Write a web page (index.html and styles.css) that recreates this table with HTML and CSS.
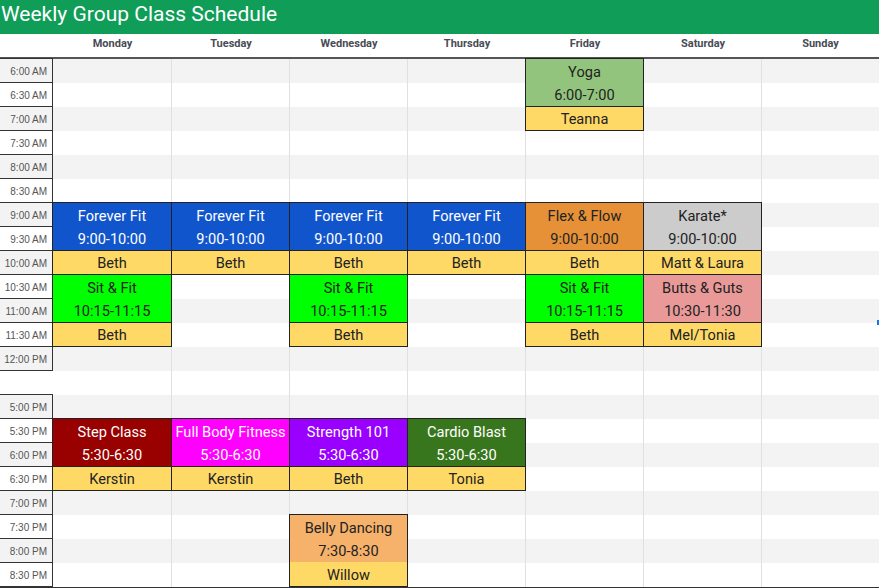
FILE: index.html
```html
<!DOCTYPE html>
<html>
<head>
<meta charset="utf-8">
<title>Weekly Group Class Schedule</title>
<link rel="stylesheet" href="styles.css">
</head>
<body>
<div class="page">
  <header class="title">Weekly Group Class Schedule</header>
  <div class="days">
    <div></div>
    <div>Monday</div><div>Tuesday</div><div>Wednesday</div><div>Thursday</div><div>Friday</div><div>Saturday</div><div>Sunday</div>
  </div>
  <div class="grid">
    <div class="col c2"></div><div class="col c3"></div><div class="col c4"></div><div class="col c5"></div><div class="col c6"></div><div class="col c7"></div>

    <div class="time">6:00 AM</div>
    <div class="time">6:30 AM</div>
    <div class="time">7:00 AM</div>
    <div class="time">7:30 AM</div>
    <div class="time">8:00 AM</div>
    <div class="time">8:30 AM</div>
    <div class="time">9:00 AM</div>
    <div class="time">9:30 AM</div>
    <div class="time">10:00 AM</div>
    <div class="time">10:30 AM</div>
    <div class="time">11:00 AM</div>
    <div class="time">11:30 AM</div>
    <div class="time">12:00 PM</div>
    <div class="gap"></div>
    <div class="time">5:00 PM</div>
    <div class="time">5:30 PM</div>
    <div class="time">6:00 PM</div>
    <div class="time">6:30 PM</div>
    <div class="time">7:00 PM</div>
    <div class="time">7:30 PM</div>
    <div class="time">8:00 PM</div>
    <div class="time">8:30 PM</div>

    <div class="cls c6 r1 yoga"><div class="top"><span>Yoga</span><span>6:00-7:00</span></div><div class="who">Teanna</div></div>

    <div class="cls c2 r7 blue"><div class="top"><span>Forever Fit</span><span>9:00-10:00</span></div><div class="who">Beth</div></div>
    <div class="cls c3 r7 blue"><div class="top"><span>Forever Fit</span><span>9:00-10:00</span></div><div class="who">Beth</div></div>
    <div class="cls c4 r7 blue"><div class="top"><span>Forever Fit</span><span>9:00-10:00</span></div><div class="who">Beth</div></div>
    <div class="cls c5 r7 blue"><div class="top"><span>Forever Fit</span><span>9:00-10:00</span></div><div class="who">Beth</div></div>
    <div class="cls c6 r7 flex"><div class="top"><span>Flex &amp; Flow</span><span>9:00-10:00</span></div><div class="who">Beth</div></div>
    <div class="cls c7 r7 karate"><div class="top"><span>Karate*</span><span>9:00-10:00</span></div><div class="who">Matt &amp; Laura</div></div>

    <div class="cls c2 r10 sit"><div class="top"><span>Sit &amp; Fit</span><span>10:15-11:15</span></div><div class="who">Beth</div></div>
    <div class="cls c4 r10 sit"><div class="top"><span>Sit &amp; Fit</span><span>10:15-11:15</span></div><div class="who">Beth</div></div>
    <div class="cls c6 r10 sit"><div class="top"><span>Sit &amp; Fit</span><span>10:15-11:15</span></div><div class="who">Beth</div></div>
    <div class="cls c7 r10 butts"><div class="top"><span>Butts &amp; Guts</span><span>10:30-11:30</span></div><div class="who">Mel/Tonia</div></div>

    <div class="cls c2 r16 step"><div class="top"><span>Step Class</span><span>5:30-6:30</span></div><div class="who">Kerstin</div></div>
    <div class="cls c3 r16 full"><div class="top"><span>Full Body Fitness</span><span>5:30-6:30</span></div><div class="who">Kerstin</div></div>
    <div class="cls c4 r16 strength"><div class="top"><span>Strength 101</span><span>5:30-6:30</span></div><div class="who">Beth</div></div>
    <div class="cls c5 r16 cardio"><div class="top"><span>Cardio Blast</span><span>5:30-6:30</span></div><div class="who">Tonia</div></div>

    <div class="cls c4 r20 belly"><div class="top"><span>Belly Dancing</span><span>7:30-8:30</span></div><div class="who plain">Willow</div></div>
  </div>
  <div class="mark"></div>
</div>
</body>
</html>
```

FILE: styles.css
```css
html, body {
  margin: 0;
  padding: 0;
  background: #fff;
}

.page {
  position: relative;
  width: 879px;
  height: 588px;
  overflow: hidden;
  font-family: Roboto, "Liberation Sans", sans-serif;
}

.title {
  height: 34px;
  background: #0f9d58;
  color: #fff;
  font-size: 21px;
  line-height: 28px;
  padding-left: 1px;
  box-sizing: border-box;
}

.days {
  display: grid;
  grid-template-columns: 53px 119px repeat(5, 118px) 117px;
  height: 25px;
  box-sizing: border-box;
  border-bottom: 2px solid #555;
  font-size: 11px;
  font-weight: bold;
  color: #474b55;
  line-height: 19px;
  text-align: center;
}

.grid {
  display: grid;
  grid-template-columns: 53px 119px repeat(5, 118px) 117px;
  grid-template-rows: repeat(22, 24px);
  background: repeating-linear-gradient(#f3f3f3 0 24px, #fff 24px 48px);
  border-bottom: 1px solid #333;
}

.col {
  grid-row: 1 / -1;
  border-right: 1px solid #e0e0e0;
}

.c2 { grid-column: 2; }
.c3 { grid-column: 3; }
.c4 { grid-column: 4; }
.c5 { grid-column: 5; }
.c6 { grid-column: 6; }
.c7 { grid-column: 7; }

.time {
  grid-column: 1;
  margin-top: -1px;
  border-top: 1px solid #333;
  border-bottom: 1px solid #333;
  border-right: 1px solid #333;
  display: flex;
  align-items: center;
  justify-content: flex-end;
  padding-right: 5px;
  padding-top: 1px;
  font-family: "Liberation Sans", Arial, sans-serif;
  font-size: 10px;
  color: #555;
  position: relative;
}

.gap {
  grid-column: 1;
  background: #fff;
}

.r1 { grid-row: 1 / span 3; }
.r7 { grid-row: 7 / span 3; }
.r10 { grid-row: 10 / span 3; }
.r16 { grid-row: 16 / span 3; }
.r20 { grid-row: 20 / span 3; }

.cls {
  margin: -1px 0 0 -1px;
  border: 1px solid #222;
  display: flex;
  flex-direction: column;
  font-size: 14.6px;
  color: #222;
  text-align: center;
  position: relative;
}

.cls .top {
  flex: 0 0 47px;
  display: flex;
  flex-direction: column;
  padding-top: 1px;
  box-sizing: border-box;
}

.cls .top span {
  flex: 1;
  display: flex;
  align-items: center;
  justify-content: center;
  white-space: nowrap;
}

.cls .who {
  flex: 1;
  border-top: 1px solid #222;
  background: #ffd966;
  display: flex;
  align-items: center;
  justify-content: center;
  padding-top: 1px;
  color: #222;
}

.cls .who.plain {
  border-top: 0;
  padding-top: 2px;
}

.yoga { background: #93c47d; }
.blue { background: #1155cc; color: #fff; }
.flex { background: #e69138; }
.karate { background: #cccccc; }
.sit { background: #00ff00; }
.butts { background: #ea9999; }
.step { background: #990000; color: #fff; }
.full { background: #ff00ff; color: #fff; }
.strength { background: #9900ff; color: #fff; }
.cardio { background: #38761d; color: #fff; }
.belly { background: #f6b26b; }

.mark {
  position: absolute;
  right: 0;
  top: 320px;
  width: 2px;
  height: 5px;
  background: #1a73e8;
}
```
